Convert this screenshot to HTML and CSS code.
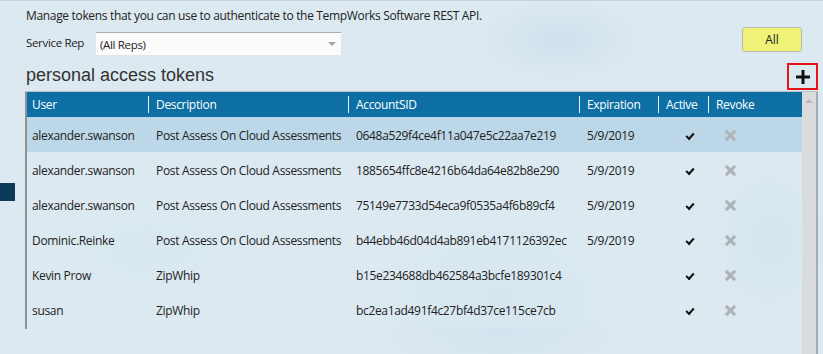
FILE: index.html
```html
<!DOCTYPE html>
<html lang="en">
<head>
    <meta charset="UTF-8">
    <title>Personal Access Tokens</title>
    <link rel="stylesheet" href="styles.css">
</head>
<body>
    <div class="side-tab"></div>
    <div class="page">
        <p class="intro">Manage tokens that you can use to authenticate to the TempWorks Software REST API.</p>

        <div class="filter-row">
            <label class="filter-label">Service Rep</label>
            <div class="select">
                <span>(All Reps)</span>
                <span class="select-arrow"></span>
            </div>
            <button class="btn-all">All</button>
        </div>

        <div class="title-row">
            <h2>personal access tokens</h2>
            <button class="btn-add" title="Add token">
                <svg width="14" height="14" viewBox="0 0 14 14"><path d="M5.5 0h3v5.5H14v3H8.5V14h-3V8.5H0v-3h5.5z" fill="#111"/></svg>
            </button>
        </div>

        <div class="grid-wrap">
            <div class="grid">
                <table>
                    <colgroup>
                        <col style="width:121px">
                        <col style="width:200px">
                        <col style="width:231px">
                        <col style="width:79px">
                        <col style="width:50px">
                        <col>
                    </colgroup>
                    <thead>
                        <tr>
                            <th>User</th>
                            <th>Description</th>
                            <th>AccountSID</th>
                            <th>Expiration</th>
                            <th>Active</th>
                            <th>Revoke</th>
                        </tr>
                    </thead>
                    <tbody>
                        <tr class="selected">
                            <td>alexander.swanson</td>
                            <td>Post Assess On Cloud Assessments</td>
                            <td>0648a529f4ce4f11a047e5c22aa7e219</td>
                            <td>5/9/2019</td>
                            <td class="icon-cell"><span class="check"></span></td>
                            <td class="icon-cell"><span class="revoke"></span></td>
                        </tr>
                        <tr>
                            <td>alexander.swanson</td>
                            <td>Post Assess On Cloud Assessments</td>
                            <td>1885654ffc8e4216b64da64e82b8e290</td>
                            <td>5/9/2019</td>
                            <td class="icon-cell"><span class="check"></span></td>
                            <td class="icon-cell"><span class="revoke"></span></td>
                        </tr>
                        <tr>
                            <td>alexander.swanson</td>
                            <td>Post Assess On Cloud Assessments</td>
                            <td>75149e7733d54eca9f0535a4f6b89cf4</td>
                            <td>5/9/2019</td>
                            <td class="icon-cell"><span class="check"></span></td>
                            <td class="icon-cell"><span class="revoke"></span></td>
                        </tr>
                        <tr>
                            <td>Dominic.Reinke</td>
                            <td>Post Assess On Cloud Assessments</td>
                            <td>b44ebb46d04d4ab891eb4171126392ec</td>
                            <td>5/9/2019</td>
                            <td class="icon-cell"><span class="check"></span></td>
                            <td class="icon-cell"><span class="revoke"></span></td>
                        </tr>
                        <tr>
                            <td>Kevin Prow</td>
                            <td>ZipWhip</td>
                            <td>b15e234688db462584a3bcfe189301c4</td>
                            <td></td>
                            <td class="icon-cell"><span class="check"></span></td>
                            <td class="icon-cell"><span class="revoke"></span></td>
                        </tr>
                        <tr>
                            <td>susan</td>
                            <td>ZipWhip</td>
                            <td>bc2ea1ad491f4c27bf4d37ce115ce7cb</td>
                            <td></td>
                            <td class="icon-cell"><span class="check"></span></td>
                            <td class="icon-cell"><span class="revoke"></span></td>
                        </tr>
                    </tbody>
                </table>
            </div>
            <div class="scrollbar">
                <span class="scroll-up"></span>
            </div>
        </div>
    </div>
</body>
</html>
```

FILE: styles.css
```css
* {
    margin: 0;
    padding: 0;
    box-sizing: border-box;
}

body {
    font-family: "Open Sans", "Noto Sans", sans-serif;
    font-size: 12px;
    letter-spacing: -0.33px;
    color: #222;
    width: 823px;
    height: 354px;
    overflow: hidden;
    position: relative;
    border-top: 1px solid #c9d2d9;
    background:
        radial-gradient(ellipse 120px 60px at 560px 40px, rgba(190, 212, 228, 0.45), transparent 70%),
        radial-gradient(ellipse 90px 120px at 770px 240px, rgba(190, 212, 228, 0.5), transparent 70%),
        radial-gradient(ellipse 160px 80px at 150px 250px, rgba(205, 224, 236, 0.5), transparent 70%),
        radial-gradient(ellipse 200px 140px at 500px 300px, rgba(196, 218, 232, 0.5), transparent 70%),
        #dde9f1;
}

.side-tab {
    position: absolute;
    left: 0;
    top: 182px;
    width: 15px;
    height: 18px;
    background: #0b3a5a;
}

.page {
    padding: 0 5px 0 25px;
}

.intro {
    padding: 6px 0 0 1px;
    height: 26px;
    font-size: 12px;
    color: #222;
}

.filter-row {
    display: flex;
    align-items: flex-start;
    height: 34px;
}

.filter-label {
    padding: 8px 0 0 1px;
    width: 71px;
    font-size: 11.5px;
}

.select {
    margin-top: 5px;
    width: 245px;
    height: 24px;
    background: #fbfbfb;
    border-top: 1px solid #a9adb1;
    border-bottom: 1px solid #e3e6e8;
    display: flex;
    align-items: center;
    justify-content: space-between;
    padding: 0 5px 0 4px;
    font-size: 11.5px;
}

.select-arrow {
    width: 0;
    height: 0;
    border-left: 4px solid transparent;
    border-right: 4px solid transparent;
    border-top: 4px solid #a3a6a8;
}

.btn-all {
    margin-left: auto;
    margin-right: 16px;
    width: 60px;
    height: 25px;
    background: #eef277;
    border: 1px solid #b9bdb0;
    border-radius: 3px;
    font-family: inherit;
    font-size: 12px;
    color: #222;
}

.title-row {
    display: flex;
    align-items: flex-end;
    justify-content: space-between;
    height: 30px;
}

.title-row h2 {
    font-family: "Liberation Sans", Arial, sans-serif;
    font-weight: normal;
    font-size: 18px;
    letter-spacing: 0;
    color: #333;
    padding: 0 0 5px 1px;
}

.btn-add {
    width: 31px;
    height: 27px;
    margin-bottom: 1px;
    background: transparent;
    border: 2px solid #e8141c;
    display: flex;
    align-items: center;
    justify-content: center;
}

.grid-wrap {
    display: flex;
    border-top: 1px solid #b8c4cc;
    height: 264px;
}

.grid {
    width: 777px;
    border-left: 2px solid #8d9296;
    height: 237px;
}

table {
    width: 775px;
    border-collapse: collapse;
    table-layout: fixed;
}

th {
    background: #0e6fa4;
    color: #fff;
    font-weight: normal;
    text-align: left;
    height: 25px;
    padding: 0 0 0 8px;
    font-size: 12px;
    position: relative;
}

th:first-child,
td:first-child {
    padding-left: 5px;
}

th + th::before {
    content: "";
    position: absolute;
    left: 0;
    top: 4px;
    bottom: 4px;
    border-left: 1px solid #e6eef4;
}

td {
    height: 35px;
    padding: 1px 0 0 8px;
    font-size: 12px;
    white-space: nowrap;
    overflow: hidden;
}

tbody tr {
    background: rgba(220, 234, 242, 0.5);
}

tbody tr.selected {
    background: #bcd7e7;
}

td.icon-cell {
    padding-left: 0;
}

.check {
    display: block;
    margin-left: 28px;
    width: 8px;
    height: 5px;
    border-left: 2px solid #111;
    border-bottom: 2px solid #111;
    transform: rotate(-48deg);
}

.revoke {
    display: block;
    margin-left: 17px;
    width: 11px;
    height: 11px;
    position: relative;
}

.revoke::before,
.revoke::after {
    content: "";
    position: absolute;
    left: -1px;
    top: 4px;
    width: 13px;
    height: 3px;
    background: #adb3b7;
    transform: rotate(45deg);
}

.revoke::after {
    transform: rotate(-45deg);
}

.scrollbar {
    width: 16px;
    background: #d9dbdd;
    border-right: 2px solid #a7acb0;
    display: flex;
    justify-content: center;
    padding-top: 7px;
}

.scroll-up {
    width: 0;
    height: 0;
    border-left: 4px solid transparent;
    border-right: 4px solid transparent;
    border-bottom: 4px solid #b6b9bb;
}
```
